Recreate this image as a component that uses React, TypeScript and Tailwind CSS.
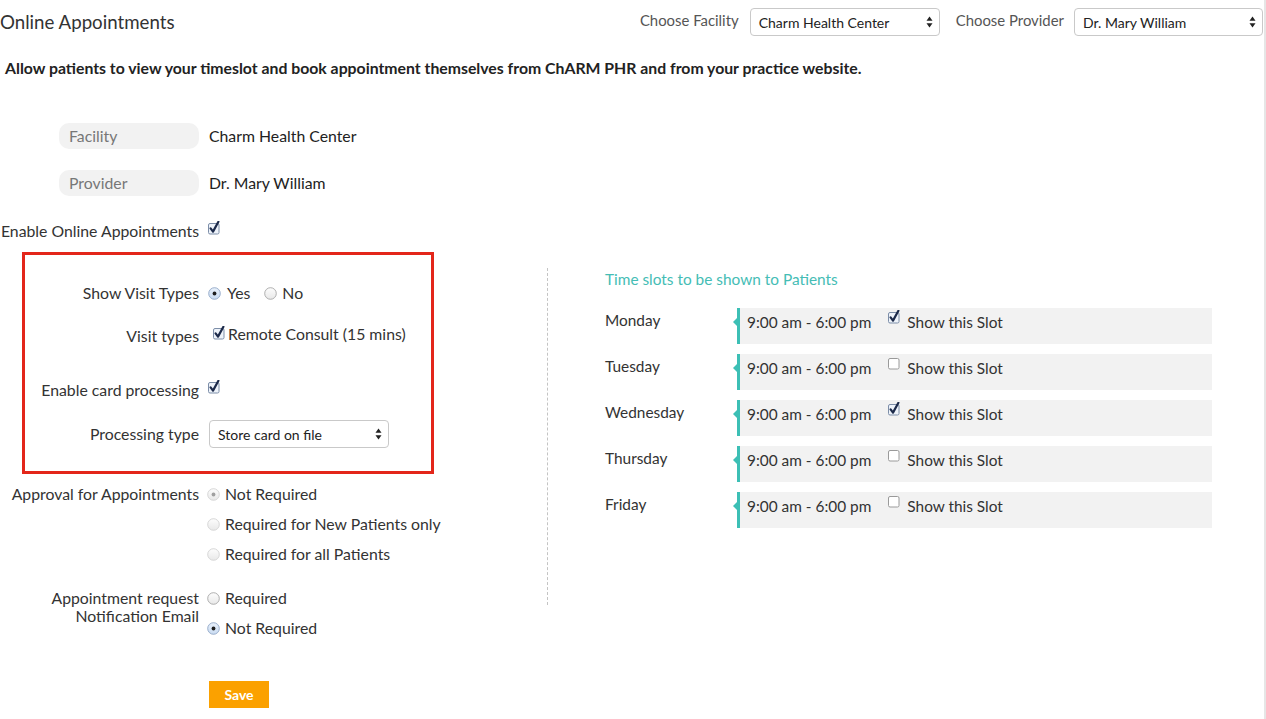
import React from "react";

const Check = ({ checked }: { checked: boolean }) => (
  <svg width="14" height="14" viewBox="0 0 14 14" className="shrink-0">
    <rect x="0.5" y="2.5" width="10.5" height="10.5" rx="1.5" fill={checked ? "#eef3fa" : "#ffffff"} stroke={checked ? "#7d8ea8" : "#9a9a9a"} />
    {checked && <path d="M2.6 7.4 L5 10.6 L10.4 0.8" fill="none" stroke="#1c2a4a" strokeWidth="2.2" strokeLinecap="round" strokeLinejoin="round" />}
  </svg>
);

const Radio = ({ on, dim }: { on: boolean; dim?: boolean }) => (
  <svg width="13" height="13" viewBox="0 0 13 13" className="shrink-0">
    <defs>
      <linearGradient id="rg" x1="0" y1="0" x2="0" y2="1">
        <stop offset="0" stopColor="#fdfdfd" />
        <stop offset="1" stopColor="#e8e8e8" />
      </linearGradient>
      <linearGradient id="rb" x1="0" y1="0" x2="0" y2="1">
        <stop offset="0" stopColor="#e9f1fb" />
        <stop offset="1" stopColor="#c9dbf1" />
      </linearGradient>
    </defs>
    <circle cx="6.5" cy="6.5" r="5.8" fill={on && !dim ? "url(#rb)" : "url(#rg)"} stroke={dim ? "#d2d2d2" : on ? "#8ea6c6" : "#a6a6a6"} strokeWidth="0.9" />
    {on && <circle cx="6.5" cy="6.5" r="1.9" fill={dim ? "#a0a0a0" : "#1f1f1f"} />}
  </svg>
);

const SelectBox = ({ value, className }: { value: string; className: string }) => (
  <div className={`flex items-center justify-between rounded-[4px] border border-[#c9c9c9] bg-white pl-[8px] pr-[6px] text-[14px] text-[#222] ${className}`}>
    <span>{value}</span>
    <svg width="7" height="12" viewBox="0 0 7 12">
      <path d="M3.5 0.5 L6.5 4.8 L0.5 4.8 Z" fill="#222" />
      <path d="M3.5 11.5 L6.5 7.2 L0.5 7.2 Z" fill="#222" />
    </svg>
  </div>
);

const days = [
  { day: "Monday", on: true },
  { day: "Tuesday", on: false },
  { day: "Wednesday", on: true },
  { day: "Thursday", on: false },
  { day: "Friday", on: false },
];

export default function App() {
  return (
    <div className="relative min-h-[719px] w-[1266px] bg-white text-[15.8px] text-[#333]" style={{ fontFamily: "Lato, 'Open Sans', sans-serif" }}>
      {/* header */}
      <div className="flex h-[44px] items-center justify-between pr-[3px]">
        <h1 className="text-[18.7px] leading-[22px] text-[#333]">Online Appointments</h1>
        <div className="flex items-center">
          <span className="mr-[11px] -mt-[3px] text-[14.9px] text-[#555]">Choose Facility</span>
          <SelectBox value="Charm Health Center" className="h-[28px] w-[190px]" />
          <span className="ml-[16px] mr-[10px] -mt-[3px] text-[14.9px] text-[#555]">Choose Provider</span>
          <SelectBox value="Dr. Mary William" className="h-[28px] w-[189px]" />
        </div>
      </div>

      <p className="mt-[14px] pl-[5px] text-[15.8px] font-bold leading-[20px] text-[#222]">
        Allow patients to view your timeslot and book appointment themselves from ChARM PHR and from your practice website.
      </p>

      {/* facility / provider */}
      <div className="mt-[45px] flex h-[26px] items-center">
        <div className="flex w-[199px] justify-end">
          <div className="flex h-[26px] w-[140px] items-center rounded-[10px] bg-[#f2f2f2] pl-[10px] text-[#777]">Facility</div>
        </div>
        <span className="ml-[10px] text-[#222]">Charm Health Center</span>
      </div>
      <div className="mt-[21px] flex h-[26px] items-center">
        <div className="flex w-[199px] justify-end">
          <div className="flex h-[26px] w-[140px] items-center rounded-[10px] bg-[#f2f2f2] pl-[10px] text-[#777]">Provider</div>
        </div>
        <span className="ml-[10px] text-[#222]">Dr. Mary William</span>
      </div>

      <div className="mt-[25px] flex h-[20px] items-center">
        <div className="w-[199px] whitespace-nowrap text-right leading-[20px]">Enable Online Appointments</div>
        <div className="ml-[9px] -mt-[6px]">
          <Check checked />
        </div>
      </div>

      <div className="flex">
        {/* left column */}
        <div className="w-[547px]">
          <div className="ml-[22px] mt-[11px] h-[222px] w-[412px] border-[3px] border-[#e3261a] pt-[28px]">
            <div className="flex h-[20px] items-center">
              <div className="w-[174px] text-right">Show Visit Types</div>
              <div className="ml-[9px] flex items-center">
                <Radio on />
                <span className="ml-[6px]">Yes</span>
                <span className="ml-[14px]"><Radio on={false} /></span>
                <span className="ml-[5px]">No</span>
              </div>
            </div>
            <div className="mt-[23px] flex h-[20px] items-center">
              <div className="w-[174px] text-right">Visit types</div>
              <div className="ml-[14px] -mt-[6px] flex items-center">
                <Check checked />
                <span className="ml-[1px] -mb-[2px]">Remote Consult (15 mins)</span>
              </div>
            </div>
            <div className="mt-[34px] flex h-[20px] items-center">
              <div className="w-[174px] whitespace-nowrap text-right">Enable card processing</div>
              <div className="ml-[9px] -mt-[7px]">
                <Check checked />
              </div>
            </div>
            <div className="mt-[20px] flex h-[28px] items-center">
              <div className="w-[174px] text-right">Processing type</div>
              <SelectBox value="Store card on file" className="ml-[10px] h-[28px] w-[180px]" />
            </div>
          </div>

          <div className="mt-[10px] flex">
            <div className="w-[199px] whitespace-nowrap text-right leading-[20px]">Approval for Appointments</div>
            <div className="ml-[8px] flex flex-col gap-[10px]">
              {["Not Required", "Required for New Patients only", "Required for all Patients"].map((t, i) => (
                <div key={t} className="flex h-[20px] items-center">
                  <Radio on={i === 0} dim />
                  <span className="ml-[5px]">{t}</span>
                </div>
              ))}
            </div>
          </div>

          <div className="mt-[24px] flex">
            <div className="w-[199px] pt-[1px] text-right leading-[18px]">
              Appointment request
              <br />
              Notification Email
            </div>
            <div className="ml-[8px] flex flex-col gap-[10px]">
              <div className="flex h-[20px] items-center">
                <Radio on={false} />
                <span className="ml-[5px]">Required</span>
              </div>
              <div className="flex h-[20px] items-center">
                <Radio on />
                <span className="ml-[5px]">Not Required</span>
              </div>
            </div>
          </div>

          <button type="button" className="ml-[209px] mt-[43px] h-[27px] w-[60px] bg-[#fba100] text-[14px] font-bold text-white">
            Save
          </button>
        </div>

        {/* right column */}
        <div className="mt-[27px] h-[337px] border-l border-dashed border-[#c4c4c4] pl-[57px] text-[15.4px]">
          <div className="pt-[1px] leading-[20px] text-[#45bdb5]">Time slots to be shown to Patients</div>
          <div className="mt-[19px] flex flex-col gap-[10px]">
            {days.map((d) => (
              <div key={d.day} className="flex">
                <div className="w-[132px] pt-[2px] leading-[20px] text-[#333]">{d.day}</div>
                <div className="relative flex h-[36px] w-[475px] items-start border-l-[3px] border-[#3cbfb5] bg-[#f2f2f2] pl-[7px] pt-[4px]">
                  <span className="absolute -left-[7px] top-[10px] h-0 w-0 border-y-[4px] border-r-[4px] border-y-transparent border-r-[#3cbfb5]" />
                  <span className="leading-[20px]">9:00 am - 6:00 pm</span>
                  <span className="ml-[17px] -mt-[2px]">
                    <Check checked={d.on} />
                  </span>
                  <span className="ml-[5px] leading-[20px]">Show this Slot</span>
                </div>
              </div>
            ))}
          </div>
        </div>
      </div>

      <div className="absolute right-0 top-0 h-[719px] w-[2px] bg-[#e6e6e6]" />
    </div>
  );
}
